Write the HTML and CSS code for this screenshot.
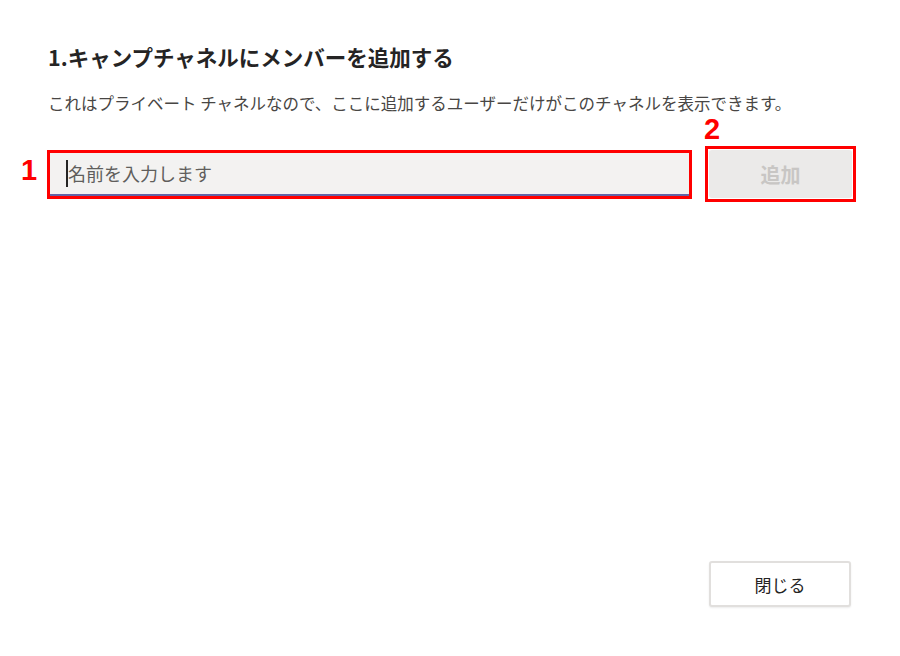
FILE: index.html
```html
<!DOCTYPE html>
<html lang="ja">
<head>
<meta charset="utf-8">
<link rel="stylesheet" href="styles.css">
</head>
<body>
<div class="dialog">
  <h1 class="title">1.キャンプチャネルにメンバーを追加する</h1>
  <p class="desc">これはプライベート チャネルなので、ここに追加するユーザーだけがこのチャネルを表示できます。</p>
  <div class="row">
    <div class="mark-wrap">
      <span class="num num-1">1</span>
      <div class="hl hl-input">
        <div class="input"><span class="caret"></span><span class="placeholder">名前を入力します</span></div>
      </div>
    </div>
    <div class="mark-wrap">
      <span class="num num-2">2</span>
      <div class="hl hl-btn">
        <button class="add">追加</button>
      </div>
    </div>
  </div>
  <div class="footer">
    <button class="close">閉じる</button>
  </div>
</div>
</body>
</html>
```

FILE: styles.css
```css
html, body {
  margin: 0;
  padding: 0;
  background: #ffffff;
}
body {
  font-family: "Noto Sans CJK JP", "Noto Sans", sans-serif;
  color: #252424;
}
.dialog {
  width: 900px;
  height: 656px;
  box-sizing: border-box;
  padding: 42px 44px 49px 47px;
  display: flex;
  flex-direction: column;
}
.title {
  margin: 0 0 0 1px;
  font-size: 21.5px;
  line-height: 30px;
  font-weight: 600;
  color: #252424;
}
.desc {
  margin: 19px 0 0 1px;
  font-size: 16.5px;
  line-height: 24px;
  color: #484644;
  white-space: nowrap;
}
.row {
  margin-top: 31px;
  display: flex;
  align-items: center;
  gap: 13px;
}
.mark-wrap {
  position: relative;
}
.num {
  position: absolute;
  font-family: "Liberation Sans", Arial, sans-serif;
  font-weight: 700;
  font-size: 29px;
  line-height: 30px;
  color: #ff0000;
}
.num-1 {
  left: -26px;
  top: 5px;
}
.num-2 {
  left: -1px;
  top: -32px;
}
.hl {
  border: 3px solid #ff0000;
}
.hl-input {
  width: 639px;
}
.input {
  height: 41px;
  background: #f3f2f1;
  border-bottom: 2px solid #6264a7;
  display: flex;
  align-items: center;
  padding-left: 16px;
  box-sizing: content-box;
}
.caret {
  width: 2px;
  height: 27px;
  background: #252424;
}
.placeholder {
  font-size: 18px;
  line-height: 27px;
  color: #605e5c;
}
.hl-btn {
  width: 145px;
  height: 50px;
  display: flex;
}
.add {
  flex: 1;
  margin: 1px;
  border: none;
  border-radius: 3px;
  background: #ebeae9;
  color: #c8c6c4;
  font-family: "Noto Sans CJK JP", sans-serif;
  font-size: 20px;
  font-weight: 700;
}
.footer {
  margin-top: auto;
  margin-right: 5px;
  display: flex;
  justify-content: flex-end;
}
.close {
  width: 142px;
  height: 46px;
  box-sizing: border-box;
  background: #ffffff;
  border: 2px solid #e1dfdd;
  border-radius: 3px;
  box-shadow: 0 1px 2px rgba(0,0,0,0.08);
  font-family: "Noto Sans CJK JP", sans-serif;
  font-size: 17px;
  color: #252424;
}
```
